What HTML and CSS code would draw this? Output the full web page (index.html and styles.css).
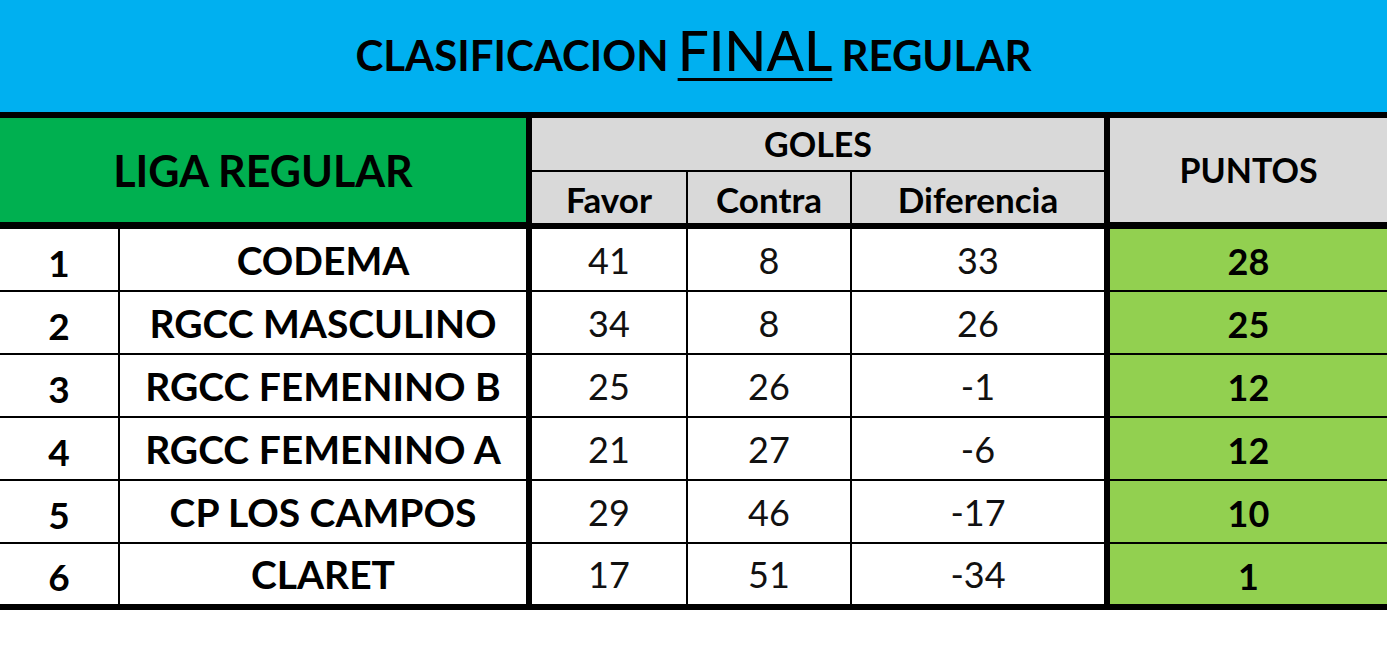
FILE: index.html
```html
<!DOCTYPE html>
<html lang="es">
<head>
<meta charset="utf-8">
<title>Clasificación final regular</title>
<link rel="stylesheet" href="styles.css">
</head>
<body>
<div class="sheet">
  <div class="title"><div class="title-text"><span class="t-bold">CLASIFICACION</span> <span class="t-final">FINAL</span> <span class="t-bold">REGULAR</span></div></div>

  <div class="cell liga">LIGA REGULAR</div>
  <div class="cell goles">GOLES</div>
  <div class="cell puntos-h">PUNTOS</div>
  <div class="cell sub">Favor</div>
  <div class="cell sub">Contra</div>
  <div class="cell sub thick-r">Diferencia</div>

  <div class="cell rank">1</div><div class="cell team">CODEMA</div><div class="cell num">41</div><div class="cell num">8</div><div class="cell num thick-r">33</div><div class="cell pts">28</div>
  <div class="cell rank">2</div><div class="cell team">RGCC MASCULINO</div><div class="cell num">34</div><div class="cell num">8</div><div class="cell num thick-r">26</div><div class="cell pts">25</div>
  <div class="cell rank">3</div><div class="cell team">RGCC FEMENINO B</div><div class="cell num">25</div><div class="cell num">26</div><div class="cell num thick-r">-1</div><div class="cell pts">12</div>
  <div class="cell rank">4</div><div class="cell team">RGCC FEMENINO A</div><div class="cell num">21</div><div class="cell num">27</div><div class="cell num thick-r">-6</div><div class="cell pts">12</div>
  <div class="cell rank">5</div><div class="cell team">CP LOS CAMPOS</div><div class="cell num">29</div><div class="cell num">46</div><div class="cell num thick-r">-17</div><div class="cell pts">10</div>
  <div class="cell rank last">6</div><div class="cell team last">CLARET</div><div class="cell num last">17</div><div class="cell num last">51</div><div class="cell num thick-r last">-34</div><div class="cell pts last">1</div>
</div>
</body>
</html>
```

FILE: styles.css
```css
html, body {
  margin: 0;
  padding: 0;
  background: #ffffff;
}

body {
  font-family: Lato, "Open Sans", "Liberation Sans", sans-serif;
  color: #000000;
}

.sheet {
  display: grid;
  grid-template-columns: 120px 412px 156px 164px 258px 277px;
  grid-template-rows: 118px 54px 57px repeat(5, 63px) 66px;
  width: 1387px;
}

.title {
  grid-column: 1 / -1;
  background: #00b0f0;
  border-bottom: 6px solid #000;
  display: flex;
  align-items: center;
  justify-content: center;
  box-sizing: border-box;
  padding-bottom: 12px;
}

.title-text {
  line-height: 1;
  white-space: nowrap;
}

.t-bold {
  font-weight: 700;
  font-size: 42px;
}

.t-final {
  font-weight: 500;
  font-size: 55px;
  text-decoration: underline;
  text-decoration-thickness: 3px;
  text-underline-offset: 7px;
  margin: 0 5px;
}

.cell {
  box-sizing: border-box;
  display: flex;
  align-items: center;
  justify-content: center;
  border-right: 2px solid #000;
  border-bottom: 2px solid #000;
  white-space: nowrap;
  background: #ffffff;
}

.liga {
  grid-column: 1 / 3;
  grid-row: 2 / 4;
  background: #00b050;
  border-right-width: 6px;
  border-bottom-width: 7px;
  font-weight: 700;
  font-size: 43px;
}

.goles {
  grid-column: 3 / 6;
  grid-row: 2 / 3;
  background: #d9d9d9;
  border-right-width: 6px;
  font-weight: 700;
  font-size: 34px;
  padding-bottom: 2px;
}

.puntos-h {
  grid-column: 6 / 7;
  grid-row: 2 / 4;
  background: #d9d9d9;
  border-right: 0;
  border-bottom-width: 7px;
  font-weight: 700;
  font-size: 34px;
  padding-bottom: 2px;
}

.sub {
  background: #d9d9d9;
  border-bottom-width: 6px;
  font-weight: 700;
  font-size: 35px;
  padding-top: 2px;
}

.thick-r {
  border-right-width: 6px;
}

.rank {
  font-weight: 700;
  font-size: 37px;
  padding-top: 5px;
}

.team {
  font-weight: 700;
  font-size: 39px;
  border-right-width: 6px;
}

.num {
  font-weight: 400;
  font-size: 36px;
  color: #111;
}

.pts {
  background: #92d050;
  border-right: 0;
  font-weight: 700;
  font-size: 36px;
  padding-top: 3px;
}

.last {
  border-bottom-width: 6px;
}
```
